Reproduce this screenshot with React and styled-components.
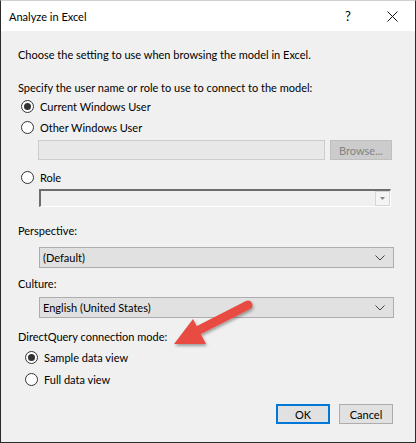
import styled, { createGlobalStyle } from "styled-components";

const GlobalStyle = createGlobalStyle`
  html, body {
    margin: 0;
    padding: 0;
    background: #ffffff;
  }
  body {
    font-family: Lato, "Noto Sans", sans-serif;
    font-size: 11px;
    color: #000;
  }
`;

const Window = styled.div`
  position: relative;
  box-sizing: border-box;
  width: 416px;
  height: 443px;
  border: 1px solid #2b2b2b;
  border-top: 1px solid #d0d0d0;
  background: #f0f0f0;
  display: flex;
  flex-direction: column;
  overflow: hidden;
`;

const TitleBar = styled.div`
  height: 30px;
  background: #fff;
  display: flex;
  align-items: center;
  padding-left: 8px;
`;

const Title = styled.div`
  flex: 1;
`;

const TitleButton = styled.div`
  width: ${(p) => p.$w}px;
  display: flex;
  justify-content: center;
  align-items: center;
  font-size: 13px;
`;

const Body = styled.div`
  padding: 0 17px;
  display: flex;
  flex-direction: column;
`;

const Label = styled.div`
  height: 16px;
  line-height: 16px;
  margin-top: ${(p) => p.$mt}px;
  white-space: nowrap;
`;

const RadioRow = styled.div`
  height: 21px;
  display: flex;
  align-items: center;
  margin-top: ${(p) => p.$mt || 0}px;
  padding-left: ${(p) => p.$indent}px;
  gap: 6px;
`;

const Circle = styled.span`
  box-sizing: border-box;
  width: 13px;
  height: 13px;
  border-radius: 50%;
  border: 1px solid #333;
  background: #fff;
  display: flex;
  justify-content: center;
  align-items: center;
  &::after {
    content: "";
    width: 7px;
    height: 7px;
    border-radius: 50%;
    background: #333;
    display: ${(p) => (p.$checked ? "block" : "none")};
  }
`;

const Radio = ({ checked, indent, mt, children }) => (
  <RadioRow $indent={indent} $mt={mt}>
    <Circle $checked={checked} />
    <span>{children}</span>
  </RadioRow>
);

const UserRow = styled.div`
  display: flex;
  margin-top: 2px;
  padding-left: 20px;
  gap: 5px;
`;

const TextBox = styled.div`
  box-sizing: border-box;
  width: 287px;
  height: 20px;
  background: #e8e8e8;
  border: 1px solid #cccccc;
`;

const BrowseButton = styled.div`
  box-sizing: border-box;
  width: 62px;
  height: 20px;
  background: #cccccc;
  border: 1px solid #bfbfbf;
  color: #838383;
  display: flex;
  justify-content: center;
  align-items: center;
`;

const RoleCombo = styled.div`
  box-sizing: border-box;
  margin-top: 1px;
  margin-left: 21px;
  width: 352px;
  height: 18px;
  background: #f0f0f0;
  border-top: 2px solid #6d6d6d;
  border-left: 2px solid #6d6d6d;
  border-right: 1px solid #ffffff;
  border-bottom: 1px solid #ffffff;
  display: flex;
  justify-content: flex-end;
`;

const RoleDrop = styled.div`
  box-sizing: border-box;
  width: 15px;
  height: 15px;
  border: 1px solid #d6d6d6;
  background: #f4f4f4;
  display: flex;
  justify-content: center;
  align-items: center;
`;

const Combo = styled.div`
  box-sizing: border-box;
  margin-top: ${(p) => p.$mt}px;
  margin-left: 21px;
  width: 355px;
  height: 21px;
  background: #e1e1e1;
  border: 1px solid #adadad;
  display: flex;
  align-items: center;
  padding: 0 8px 0 3px;
  justify-content: space-between;
`;

const Chevron = () => (
  <svg width="10" height="6" viewBox="0 0 10 6">
    <path d="M0.5 0.5 L5 5 L9.5 0.5" fill="none" stroke="#444" strokeWidth="1" />
  </svg>
);

const Footer = styled.div`
  display: flex;
  justify-content: flex-end;
  gap: 9px;
  margin-top: 14px;
  padding-right: 5px;
`;

const Button = styled.div`
  box-sizing: border-box;
  width: 54px;
  height: 20px;
  background: #e1e1e1;
  border: ${(p) => (p.$primary ? "2px solid #0078d7" : "1px solid #adadad")};
  display: flex;
  justify-content: center;
  align-items: center;
`;

const ArrowOverlay = styled.svg`
  position: absolute;
  left: 0;
  top: 0;
  pointer-events: none;
`;

export default function App() {
  return (
    <>
      <GlobalStyle />
      <Window>
        <TitleBar>
          <Title>Analyze in Excel</Title>
          <TitleButton $w={42}>?</TitleButton>
          <TitleButton $w={46}>
            <svg width="11" height="11" viewBox="0 0 11 11">
              <path d="M0.5 0.5 L10.5 10.5 M10.5 0.5 L0.5 10.5" stroke="#111" strokeWidth="1" />
            </svg>
          </TitleButton>
        </TitleBar>
        <Body>
          <Label $mt={16}>Choose the setting to use when browsing the model in Excel.</Label>
          <Label $mt={17}>Specify the user name or role to use to connect to the model:</Label>
          <Radio checked indent={3}>Current Windows User</Radio>
          <Radio indent={3}>Other Windows User</Radio>
          <UserRow>
            <TextBox />
            <BrowseButton>Browse...</BrowseButton>
          </UserRow>
          <Radio indent={3} mt={7}>Role</Radio>
          <RoleCombo>
            <RoleDrop>
              <svg width="5" height="3" viewBox="0 0 5 3">
                <path d="M0 0 L5 0 L2.5 3 Z" fill="#888" />
              </svg>
            </RoleDrop>
          </RoleCombo>
          <Label $mt={16}>Perspective:</Label>
          <Combo $mt={8}>
            <span>(Default)</span>
            <Chevron />
          </Combo>
          <Label $mt={8}>Culture:</Label>
          <Combo $mt={5}>
            <span>English (United States)</span>
            <Chevron />
          </Combo>
          <Label $mt={11}>DirectQuery connection mode:</Label>
          <Radio checked indent={7} mt={2}>Sample data view</Radio>
          <Radio indent={7} mt={1}>Full data view</Radio>
          <Footer>
            <Button $primary>OK</Button>
            <Button>Cancel</Button>
          </Footer>
        </Body>
        <ArrowOverlay width="416" height="443" viewBox="0 0 416 443">
          <defs>
            <filter id="sh" x="-20%" y="-20%" width="140%" height="140%">
              <feDropShadow dx="1" dy="2" stdDeviation="1.5" floodColor="#000" floodOpacity="0.35" />
            </filter>
          </defs>
          <g filter="url(#sh)">
            <line x1="247" y1="304" x2="196" y2="330" stroke="#e84c42" strokeWidth="9" strokeLinecap="round" />
            <polygon points="173,343 192,318 205,343" fill="#e84c42" />
          </g>
        </ArrowOverlay>
      </Window>
    </>
  );
}
